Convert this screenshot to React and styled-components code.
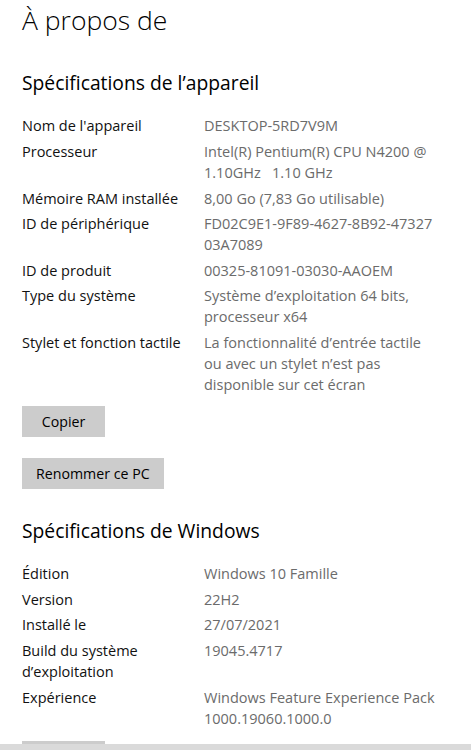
import React from "react";
import styled, { createGlobalStyle } from "styled-components";

const GlobalStyle = createGlobalStyle`
  html, body {
    margin: 0;
    padding: 0;
    background: #ffffff;
    overflow: hidden;
  }
  body {
    font-family: "Open Sans", "Noto Sans", "Liberation Sans", sans-serif;
    color: #000000;
  }
`;

const Page = styled.div`
  display: flex;
  flex-direction: column;
  padding: 0 22px;
`;

const PageTitle = styled.h1`
  margin: 0;
  font-size: 26.5px;
  font-weight: 300;
  line-height: 41px;
  color: #000000;
`;

const SectionTitle = styled.h2`
  margin: ${(props) => props.top}px 0 18px 0;
  font-size: 19.3px;
  font-weight: 400;
  line-height: 28px;
  color: #000000;
`;

const SpecList = styled.div`
  display: grid;
  grid-template-columns: 182px 1fr;
  row-gap: 4.6px;
  font-size: 14.5px;
  line-height: 21px;
`;

const SpecLabel = styled.div`
  color: #111111;
  white-space: pre;
`;

const SpecValue = styled.div`
  color: #6b6b6b;
  white-space: pre;
`;

// bouton gris facon Windows 10
const GrayButton = styled.button`
  align-self: flex-start;
  margin-top: ${(props) => props.top}px;
  min-width: 83px;
  height: 31px;
  padding: 0 14px;
  border: none;
  border-radius: 0;
  background: #cccccc;
  color: #000000;
  font-family: inherit;
  font-size: 14.2px;
  line-height: 31px;
`;

const BottomBar = styled.div`
  position: fixed;
  left: 0;
  right: 0;
  bottom: 0;
  height: 6px;
  background: #dadada;
`;

const deviceSpecs = [
  [["Nom de l'appareil"], ["DESKTOP-5RD7V9M"]],
  [["Processeur"], ["Intel(R) Pentium(R) CPU N4200 @", "1.10GHz   1.10 GHz"]],
  [["Mémoire RAM installée"], ["8,00 Go (7,83 Go utilisable)"]],
  [["ID de périphérique"], ["FD02C9E1-9F89-4627-8B92-47327", "03A7089"]],
  [["ID de produit"], ["00325-81091-03030-AAOEM"]],
  [["Type du système"], ["Système d’exploitation 64 bits,", "processeur x64"]],
  [
    ["Stylet et fonction tactile"],
    [
      "La fonctionnalité d’entrée tactile",
      "ou avec un stylet n’est pas",
      "disponible sur cet écran",
    ],
  ],
];

const windowsSpecs = [
  [["Édition"], ["Windows 10 Famille"]],
  [["Version"], ["22H2"]],
  [["Installé le"], ["27/07/2021"]],
  [["Build du système", "d’exploitation"], ["19045.4717"]],
  [["Expérience"], ["Windows Feature Experience Pack", "1000.19060.1000.0"]],
];

const Specs = ({ rows }) => {
  return (
    <SpecList>
      {rows.map(([label, value], i) => (
        <React.Fragment key={i}>
          <SpecLabel>{label.join("\n")}</SpecLabel>
          <SpecValue>{value.join("\n")}</SpecValue>
        </React.Fragment>
      ))}
    </SpecList>
  );
};

export default function App() {
  return (
    <>
      <GlobalStyle />
      <Page>
        <PageTitle>À propos de</PageTitle>

        <SectionTitle top={28.4}>Spécifications de l’appareil</SectionTitle>
        <Specs rows={deviceSpecs} />
        <GrayButton top={11.4}>Copier</GrayButton>
        <GrayButton top={21}>Renommer ce PC</GrayButton>

        <SectionTitle top={27.8}>Spécifications de Windows</SectionTitle>
        <Specs rows={windowsSpecs} />
        <GrayButton top={12}>Copier</GrayButton>
      </Page>
      <BottomBar />
    </>
  );
}
